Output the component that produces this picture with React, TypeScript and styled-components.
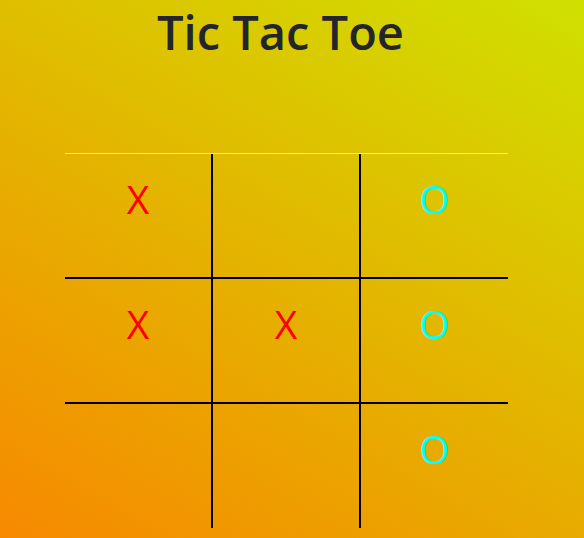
import React from "react";
import styled, { createGlobalStyle } from "styled-components";

const Global = createGlobalStyle`
  html, body { margin: 0; padding: 0; }
  body {
    width: 584px;
    height: 538px;
    overflow: hidden;
    font-family: "Open Sans", "Noto Sans", sans-serif;
    background: linear-gradient(30deg, #f78900 0%, #d0e000 100%);
  }
`;

const Page = styled.div`
  width: 584px;
  height: 538px;
  display: flex;
  flex-direction: column;
`;

const Title = styled.h1`
  margin: 0;
  width: 561px;
  text-align: center;
  font-family: "Open Sans", sans-serif;
  font-weight: 600;
  font-size: 47px;
  line-height: 64px;
  color: #23252a;
`;

const Board = styled.div`
  margin: 89px 0 0 65px;
  width: 443px;
  display: grid;
  grid-template-columns: 148px 148px 147px;
  grid-template-rows: 125px 125px 124px;
  border-top: 1px solid #f2ea9a;
`;

const Cell = styled.div<{ $right: boolean; $bottom: boolean }>`
  box-sizing: border-box;
  border-right: ${(p) => (p.$right ? "2px solid #000" : "none")};
  border-bottom: ${(p) => (p.$bottom ? "2px solid #000" : "none")};
  display: flex;
  justify-content: center;
  align-items: flex-start;
  padding-top: 18px;
  font-family: "Open Sans", sans-serif;
  font-size: 39px;
  line-height: normal;
`;

const Mark = styled.span<{ $o: boolean }>`
  color: ${(p) => (p.$o ? "#00ffff" : "#ff0000")};
`;

const cells = ["X", "", "O", "X", "X", "O", "", "", "O"];

export default function App() {
  return (
    <>
      <Global />
      <Page>
        <Title>Tic Tac Toe</Title>
        <Board>
          {cells.map((v, i) => (
            <Cell key={i} $right={i % 3 !== 2} $bottom={i < 6}>
              {v && <Mark $o={v === "O"}>{v}</Mark>}
            </Cell>
          ))}
        </Board>
      </Page>
    </>
  );
}
